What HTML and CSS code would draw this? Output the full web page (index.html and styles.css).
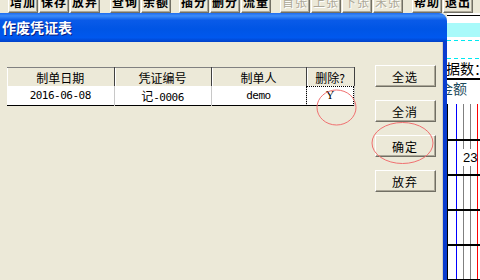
FILE: index.html
```html
<!DOCTYPE html>
<html lang="zh-CN">
<head>
<meta charset="UTF-8">
<title>作废凭证表</title>
<link rel="stylesheet" href="styles.css">
</head>
<body>
<div class="toolbar">
  <div class="tb-group"><span class="tb-btn">增加</span><span class="tb-btn">保存</span><span class="tb-btn">放弃</span></div>
  <div class="tb-group g2"><span class="tb-btn">查询</span><span class="tb-btn">余额</span></div>
  <div class="tb-group g3"><span class="tb-btn">插分</span><span class="tb-btn">删分</span><span class="tb-btn">流量</span></div>
  <div class="tb-group g4"><span class="tb-btn off">首张</span><span class="tb-btn off">上张</span><span class="tb-btn off">下张</span><span class="tb-btn off">末张</span></div>
  <div class="tb-group g5"><span class="tb-btn">帮助</span><span class="tb-btn">退出</span></div>
</div>

<div class="workspace">
  <div class="dialog">
    <div class="titlebar">作废凭证表</div>
    <div class="dialog-body">
      <table class="voucher-grid">
        <colgroup>
          <col class="c-date"><col class="c-no"><col class="c-user"><col class="c-del">
        </colgroup>
        <tr class="head">
          <th>制单日期</th>
          <th>凭证编号</th>
          <th>制单人</th>
          <th>删除?</th>
        </tr>
        <tr>
          <td class="mono">2016-06-08</td>
          <td><span class="cjk">记</span><span class="mono">-0006</span></td>
          <td class="mono">demo</td>
          <td class="focus">Y</td>
        </tr>
      </table>
      <div class="actions">
        <button class="btn">全选</button>
        <button class="btn">全消</button>
        <button class="btn">确定</button>
        <button class="btn">放弃</button>
      </div>
      <!-- hand drawn marks over the grid -->
      <svg class="marks" width="443" height="238" viewBox="0 0 443 238">
        <ellipse cx="336.5" cy="65.5" rx="19.5" ry="17.5" fill="none" stroke="#f07070" stroke-width="1"/>
        <ellipse cx="402.5" cy="101" rx="30.5" ry="20.5" fill="none" stroke="#f07070" stroke-width="1"/>
      </svg>
    </div>
  </div>

  <div class="sheet">
    <div class="sheet-rule"></div>
    <div class="sheet-band"></div>
    <div class="sheet-dash first"></div>
    <div class="sheet-dash"></div>
    <div class="sheet-count">据数：</div>
    <div class="sheet-amount">金额</div>
    <div class="sheet-grid">
      <div class="grid-row tall"></div>
      <div class="grid-row"><span class="num">23</span></div>
      <div class="grid-row"></div>
      <div class="grid-row"></div>
      <div class="grid-row"></div>
    </div>
  </div>
</div>
</body>
</html>
```

FILE: styles.css
```css
body {
    margin: 0;
    width: 480px;
    height: 280px;
    overflow: hidden;
    background-color: #ece9d8;
    font-family: "Noto Sans CJK SC", sans-serif;
    font-size: 12px;
    color: #000;
}

/* top toolbar, only its lower part is visible */
.toolbar {
    display: flex;
    align-items: flex-end;
    height: 13px;
    overflow: hidden;
    padding-left: 8px;
}

.tb-group {
    display: flex;
    gap: 1px;
}

.g2 { margin-left: 10px; }
.g3 { margin-left: 8px; }
.g4 { margin-left: 9px; }
.g5 { margin-left: 9px; }

.tb-btn {
    box-sizing: border-box;
    width: 30px;
    height: 21px;
    line-height: 17px;
    text-align: center;
    border: 1px solid;
    border-color: #fff #716f64 #716f64 #fff;
    box-shadow: inset -1px -1px #aca899;
    font-size: 12px;
    font-weight: bold;
    letter-spacing: 1px;
}

.tb-btn.off {
    color: #aca899;
    font-weight: normal;
    text-shadow: 1px 1px #fff;
}

.workspace {
    display: flex;
    height: 267px;
}

/* the XP style dialog */
.dialog {
    width: 447px;
    display: flex;
    flex-direction: column;
}

.titlebar {
    height: 29px;
    line-height: 29px;
    padding-left: 2px;
    border-top-right-radius: 8px;
    background: linear-gradient(to bottom, #1d6cf0 0%, #3d8cf8 10%, #0a5be8 25%, #0055e5 55%, #0058ee 85%, #0141c8 100%);
    color: #fff;
    font-size: 14px;
    font-weight: bold;
    text-shadow: 1px 1px #0a1e80;
}

.dialog-body {
    position: relative;
    flex: 1;
    display: flex;
    align-items: flex-start;
    padding: 23px 0 0 7px;
    border-right: 4px solid #0a3ccf;
    box-shadow: inset -1px 0 #d0cec0;
}

.voucher-grid {
    margin-top: 2px;
    border-collapse: collapse;
    table-layout: fixed;
    width: 347px;
    border-top: 1px solid #808080;
    border-bottom: 1px solid #000;
}

.voucher-grid th {
    height: 18px;
    padding: 0;
    font-weight: normal;
    font-size: 12px;
    background-color: #ece9d8;
    border-right: 1px solid #404040;
    box-shadow: inset 1px 0 #fff;
}

.voucher-grid td {
    height: 19px;
    padding: 0;
    text-align: center;
    background-color: #fff;
    border-right: 1px solid #c8c8c8;
}

.c-date { width: 107px; }
.c-no { width: 97px; }
.c-user { width: 95px; }
.c-del { width: 48px; }

.mono {
    font-family: "DejaVu Sans Mono", monospace;
    font-size: 11px;
    letter-spacing: -0.5px;
}

.cjk {
    font-size: 12px;
}

.voucher-grid td.focus {
    outline: 1px dotted #000;
    outline-offset: -1px;
    font-family: "Liberation Serif", serif;
    font-size: 12px;
}

.actions {
    display: flex;
    flex-direction: column;
    gap: 13px;
    margin-left: 20px;
}

.btn {
    width: 61px;
    height: 22px;
    padding: 0;
    background-color: #ece9d8;
    border: 1px solid;
    border-color: #fff #716f64 #716f64 #fff;
    box-shadow: inset -1px -1px #aca899;
    font-family: "Noto Sans CJK SC", sans-serif;
    font-size: 12px;
    letter-spacing: 1px;
    color: #000;
}

.marks {
    position: absolute;
    left: 0;
    top: 0;
    pointer-events: none;
}

/* the window behind the dialog */
.sheet {
    flex: 1;
    overflow: hidden;
    background-color: #fff;
    font-size: 14px;
}

.sheet-rule {
    height: 2px;
    border-bottom: 1px solid #000;
}

.sheet-band {
    height: 14px;
    margin-top: 7px;
    background-color: #a8fafa;
}

.sheet-dash {
    height: 1px;
    margin-top: 3px;
    background: repeating-linear-gradient(to right, #00e8f0 0 4px, transparent 4px 7px);
}

.sheet-dash + .sheet-dash {
    margin-top: 17px;
}

.sheet-count {
    height: 19px;
    line-height: 19px;
    border-bottom: 2px solid #000;
    margin-left: -1px;
    white-space: nowrap;
}

.sheet-amount {
    height: 24px;
    line-height: 16px;
    margin-left: -8px;
    color: #1c4a5a;
    white-space: nowrap;
}

.sheet-grid {
    background: linear-gradient(to right, #000 0 1px, #fff 1px 9px, #0000ff 9px 10px, #fff 10px 16px, #808080 16px 17px, #fff 17px 23px, #808080 23px 24px, #fff 24px 30px, #ff0000 30px 31px, #fff 31px);
}

.grid-row {
    height: 33px;
    border-bottom: 2px solid #000;
    display: flex;
    align-items: center;
}

.grid-row.tall {
    height: 35px;
}

.num {
    margin-left: 16px;
    padding: 1px 0;
    background-color: #fff;
    font-family: "Liberation Sans", sans-serif;
    font-size: 13px;
    white-space: nowrap;
}
```
